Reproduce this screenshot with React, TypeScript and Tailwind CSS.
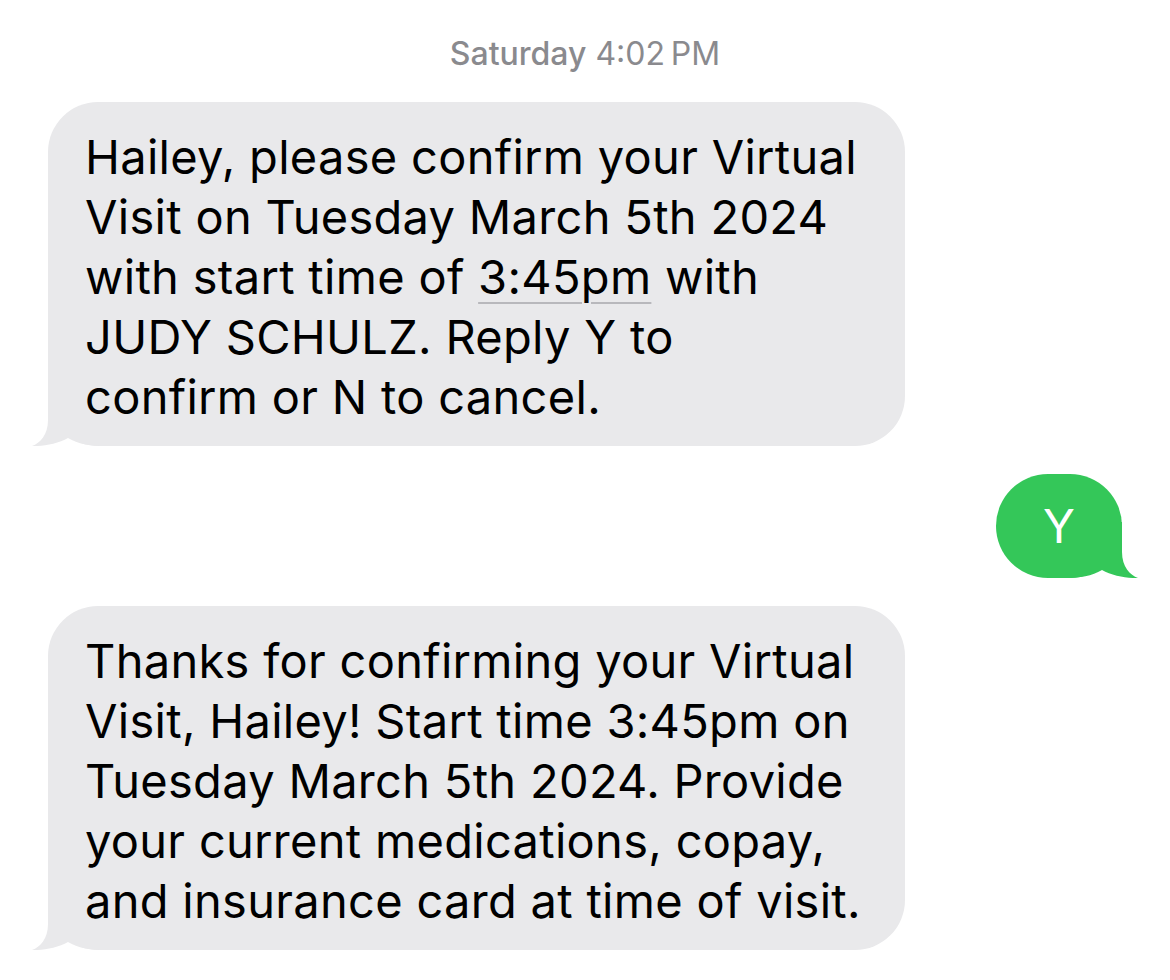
const firstMessage = [
  'Hailey, please confirm your Virtual',
  'Visit on Tuesday March 5th 2024',
  'with start time of __TIME__ with',
  'JUDY SCHULZ. Reply Y to',
  'confirm or N to cancel.',
];

const secondMessage = [
  'Thanks for confirming your Virtual',
  'Visit, Hailey! Start time 3:45pm on',
  'Tuesday March 5th 2024. Provide',
  'your current medications, copay,',
  'and insurance card at time of visit.',
];

function Tail({ color, flip }: { color: string; flip?: boolean }) {
  return (
    <svg
      width="80"
      height="60"
      viewBox="0 0 80 60"
      className={flip ? 'absolute -right-4 bottom-0 -scale-x-100' : 'absolute -left-4 bottom-0'}
    >
      <path
        d="M16 4 L16 34 C16 49 8 57 0 60 C10 60.5 26 58 36 52 C46 58 58 60 73 60 L73 4 Z"
        fill={color}
      />
    </svg>
  );
}

function Line({ text }: { text: string }) {
  if (text.includes('__TIME__')) {
    const [before, after] = text.split('__TIME__');
    return (
      <div className="whitespace-pre">
        {before}
        <span className="underline decoration-[#b8b8bc] decoration-2 underline-offset-[8px]">3:45pm</span>
        {after}
      </div>
    );
  }
  return <div className="whitespace-pre">{text}</div>;
}

function IncomingBubble({ lines }: { lines: string[] }) {
  return (
    <div className="relative w-[857px] rounded-[50px] bg-[#e9e9eb] pl-[37px] pr-6 pt-[25px] pb-[19px] text-[47px] leading-[60px] tracking-[0.3px] text-black">
      <Tail color="#e9e9eb" />
      <div className="relative">
        {lines.map((l) => (
          <Line key={l} text={l} />
        ))}
      </div>
    </div>
  );
}

export default function App() {
  return (
    <div
      className="flex min-h-[980px] w-[1170px] flex-col bg-white px-12"
      style={{ fontFamily: 'Inter, "Liberation Sans", sans-serif' }}
    >
      <div className="pt-[35px] pb-[29px] text-center text-[32px] leading-[38px] text-[#8a8a8e]">
        <span className="font-medium">Saturday</span> 4:02{'\u2009'}PM
      </div>

      <IncomingBubble lines={firstMessage} />

      <div className="mt-[28px] flex justify-end">
        <div className="relative flex h-[104px] w-[126px] items-center justify-center rounded-[52px] bg-[#34c759] text-[47px] text-white">
          <Tail color="#34c759" flip />
          <span className="relative">Y</span>
        </div>
      </div>

      <div className="mt-[28px]">
        <IncomingBubble lines={secondMessage} />
      </div>
    </div>
  );
}
